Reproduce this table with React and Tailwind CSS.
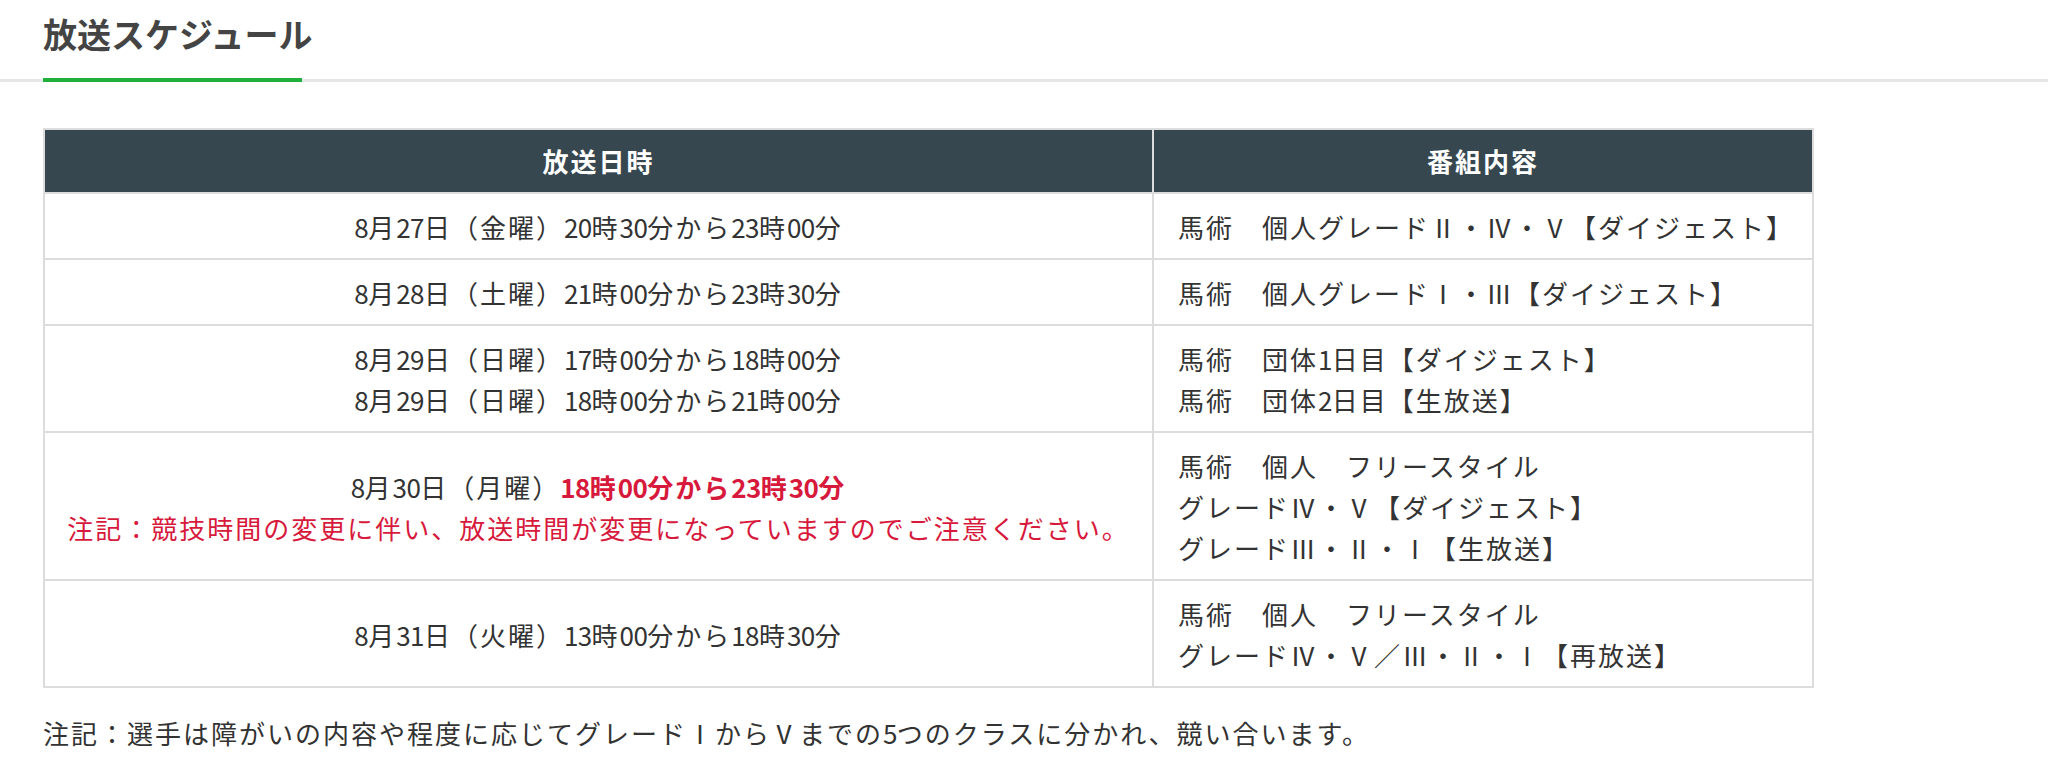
import React from "react";

const FONT = { fontFamily: '"Noto Sans CJK JP", "Noto Sans CJK SC", sans-serif' };

function T({ children }) {
  const parts = String(children).split(/(\d+)/);
  return (
    <>
      {parts.map((p, i) =>
        /^\d+$/.test(p) ? (
          <span key={i} className="tracking-[-0.6px]">
            {p}
          </span>
        ) : (
          <React.Fragment key={i}>{p}</React.Fragment>
        )
      )}
    </>
  );
}

const rows = [
  {
    left: [<span key="a"><T>8月27日（金曜）20時30分から23時00分</T></span>],
    right: ["馬術　個人グレードⅡ・Ⅳ・Ⅴ【ダイジェスト】"],
  },
  {
    left: [<span key="a"><T>8月28日（土曜）21時00分から23時30分</T></span>],
    right: ["馬術　個人グレードⅠ・Ⅲ【ダイジェスト】"],
  },
  {
    left: [
      <span key="a"><T>8月29日（日曜）17時00分から18時00分</T></span>,
      <span key="b"><T>8月29日（日曜）18時00分から21時00分</T></span>,
    ],
    right: ["馬術　団体1日目【ダイジェスト】", "馬術　団体2日目【生放送】"],
  },
  {
    left: [
      <span key="a">
        <T>8月30日（月曜）</T>
        <span className="font-bold text-[#d7193c]"><T>18時00分から23時30分</T></span>
      </span>,
      <span key="b" className="text-[#d7193c]">
        注記：競技時間の変更に伴い、放送時間が変更になっていますのでご注意ください。
      </span>,
    ],
    right: [
      "馬術　個人　フリースタイル",
      "グレードⅣ・Ⅴ【ダイジェスト】",
      "グレードⅢ・Ⅱ・Ⅰ【生放送】",
    ],
  },
  {
    left: [<span key="a"><T>8月31日（火曜）13時00分から18時30分</T></span>],
    right: ["馬術　個人　フリースタイル", "グレードⅣ・Ⅴ／Ⅲ・Ⅱ・Ⅰ【再放送】"],
  },
];

export default function App() {
  return (
    <div className="w-[2048px] min-h-[772px] bg-white text-[#333333]" style={FONT}>
      <div className="pl-[43px] pt-[10px]">
        <h2 className="text-[34px] leading-[48px] font-bold text-[#444444]">放送スケジュール</h2>
      </div>
      <div className="mt-[20px] flex items-center">
        <div className="w-[43px] h-[3px] bg-[#e6e6e6]" />
        <div className="w-[259px] h-[4px] bg-[#1fb13a]" />
        <div className="flex-1 h-[3px] bg-[#e6e6e6]" />
      </div>
      <div className="pl-[43px] pt-[46px]">
        <table className="w-[1771px] border-collapse border-2 border-[#dcdcdc] text-[26px] tracking-[2px]">
          <thead>
            <tr>
              <th className="w-[1109px] bg-[#37474f] text-white font-bold leading-[41px] pt-[10px] pb-[11px] border-2 border-[#dcdcdc] text-center">
                放送日時
              </th>
              <th className="bg-[#37474f] text-white font-bold leading-[41px] pt-[10px] pb-[11px] border-2 border-[#dcdcdc] text-center">
                番組内容
              </th>
            </tr>
          </thead>
          <tbody>
            {rows.map((r, i) => (
              <tr key={i}>
                <td className="border-2 border-[#dcdcdc] px-4 pt-[12px] pb-[11px] text-center align-middle leading-[41px] whitespace-nowrap font-normal">
                  <div className="flex flex-col items-center">{r.left}</div>
                </td>
                <td className="border-2 border-[#dcdcdc] pl-6 pr-2 pt-[12px] pb-[11px] text-left align-middle leading-[41px] whitespace-nowrap">
                  <div className="flex flex-col">
                    {r.right.map((t, j) => (
                      <span key={j}>
                        <T>{t}</T>
                      </span>
                    ))}
                  </div>
                </td>
              </tr>
            ))}
          </tbody>
        </table>
        <p className="mt-[24px] text-[26px] leading-[41px] tracking-[2px] whitespace-nowrap">
          <T>注記：選手は障がいの内容や程度に応じてグレードⅠからⅤまでの5つのクラスに分かれ、競い合います。</T>
        </p>
      </div>
    </div>
  );
}
